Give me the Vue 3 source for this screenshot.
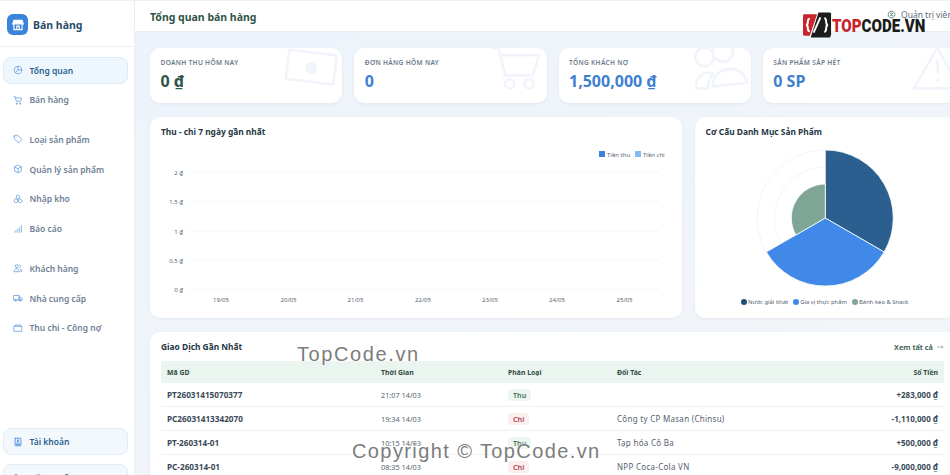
<script setup>
const icons = {
  pie: ['M21 12a9 9 0 1 1-18 0 9 9 0 0 1 18 0z', 'M12 3v9h9', 'M12 12l-6 6'],
  cart: ['M3 4h2.500l2.200 11h10.600L20.500 7H6.200', 'M9 20a1.300 1.300 0 1 0 .01 0z', 'M17 20a1.300 1.300 0 1 0 .01 0z'],
  tag: ['M3 5v6l9.500 9.500a1.500 1.500 0 0 0 2.100 0l5.900-5.900a1.500 1.500 0 0 0 0-2.100L11 3H5a2 2 0 0 0-2 2z', 'M7.500 7.500h.01'],
  box: ['M12 3l8 4v10l-8 4-8-4V7z', 'M4 7l8 4 8-4', 'M12 11v10'],
  cubes: ['M12 3l4 2.200v4.600L12 12 8 9.800V5.200z', 'M7 12l4 2.200v4.600L7 21l-4-2.200v-4.600z', 'M17 12l4 2.200v4.600L17 21l-4-2.200v-4.600z'],
  bars: ['M5 20v-3', 'M10 20v-7', 'M15 20V9', 'M20 20V4'],
  users: ['M9 11a3.500 3.500 0 1 0 0-7 3.500 3.500 0 0 0 0 7z', 'M2.500 20c0-4 3-6 6.500-6s6.500 2 6.500 6z', 'M16 4.500a3.500 3.500 0 0 1 0 6.500', 'M18 14.500c2 .8 3.500 2.500 3.500 5.500H19'],
  truck: ['M2 6h13v11H2z', 'M15 10h4l3 4v3h-7z', 'M6.500 19a2 2 0 1 0 0-4 2 2 0 0 0 0 4z', 'M17.500 19a2 2 0 1 0 0-4 2 2 0 0 0 0 4z'],
  wallet: ['M3 8h18v12H3z', 'M5 8V5h14v3'],
  account: ['M6 3h12a1 1 0 0 1 1 1v16a1 1 0 0 1-1 1H6a1 1 0 0 1-1-1V4a1 1 0 0 1 1-1z', 'M12 7.500a2.200 2.200 0 1 0 .01 0z', 'M8 17c0-2.500 1.800-3.500 4-3.500s4 1 4 3.500z'],
  logout: ['M9 4H5v16h4', 'M15 8l4 4-4 4', 'M19 12H9'],
  user: ['M12 3a9 9 0 1 0 .01 0z', 'M12 7.500a2.300 2.300 0 1 0 .01 0z', 'M8 16.500c0-2 2-3 4-3s4 1 4 3'],
}

const navGroups = [
  [
    { label: 'Tổng quan', icon: 'pie', active: true },
    { label: 'Bán hàng', icon: 'cart' },
  ],
  [
    { label: 'Loại sản phẩm', icon: 'tag' },
    { label: 'Quản lý sản phẩm', icon: 'box' },
    { label: 'Nhập kho', icon: 'cubes' },
    { label: 'Báo cáo', icon: 'bars' },
  ],
  [
    { label: 'Khách hàng', icon: 'users' },
    { label: 'Nhà cung cấp', icon: 'truck' },
    { label: 'Thu chi - Công nợ', icon: 'wallet' },
  ],
]

const kpis = [
  { label: 'Doanh thu hôm nay', value: '0 ₫', tone: 'green', art: 'bill' },
  { label: 'Đơn hàng hôm nay', value: '0', tone: 'blue', art: 'cart' },
  { label: 'Tổng khách nợ', value: '1,500,000 ₫', tone: 'blue', art: 'people' },
  { label: 'Sản phẩm sắp hết', value: '0 SP', tone: 'blue', art: 'warn' },
]

const yTicks = [
  { y: 172, label: '2 ₫' },
  { y: 201.500, label: '1,5 ₫' },
  { y: 231, label: '1 ₫' },
  { y: 260.500, label: '0,5 ₫' },
  { y: 289.500, label: '0 ₫' },
]
const xTicks = [
  { x: 221, label: '19/05' },
  { x: 288.500, label: '20/05' },
  { x: 355.500, label: '21/05' },
  { x: 423, label: '22/05' },
  { x: 490, label: '23/05' },
  { x: 557, label: '24/05' },
  { x: 624.500, label: '25/05' },
]

const pieLegend = [
  { label: 'Nước giải khát', color: '#1f4e79' },
  { label: 'Gia vị thực phẩm', color: '#4189e8' },
  { label: 'Bánh kẹo & Snack', color: '#7ea595' },
]

const rows = [
  { id: 'PT26031415070377', time: '21:07 14/03', kind: 'Thu', partner: '', amount: '+283,000 ₫' },
  { id: 'PC26031413342070', time: '19:34 14/03', kind: 'Chi', partner: 'Công ty CP Masan (Chinsu)', amount: '-1,110,000 ₫' },
  { id: 'PT-260314-01', time: '10:15 14/03', kind: 'Thu', partner: 'Tạp hóa Cô Ba', amount: '+500,000 ₫' },
  { id: 'PC-260314-01', time: '08:35 14/03', kind: 'Chi', partner: 'NPP Coca-Cola VN', amount: '-9,000,000 ₫' },
]
</script>

<template>
  <div class="app">
    <aside class="sidebar">
      <div class="brand">
        <span class="brand-mark">
          <svg viewBox="0 0 24 24" class="brand-icon">
            <path class="awning" d="M5 4h14l2 6H3z" />
            <path d="M5 10v10h14V10" />
            <path d="M10 20v-6h4v6" />
          </svg>
        </span>
        <span class="brand-name">Bán hàng</span>
      </div>
      <nav class="nav">
        <div v-for="(group, g) in navGroups" :key="g" class="nav-group">
          <a v-for="item in group" :key="item.label" class="nav-item" :class="{ active: item.active }">
            <svg viewBox="0 0 24 24" class="nav-icon">
              <path v-for="d in icons[item.icon]" :key="d" :d="d" />
            </svg>
            {{ item.label }}
          </a>
        </div>
      </nav>
      <div class="side-foot">
        <a class="foot-item">
          <svg viewBox="0 0 24 24" class="nav-icon">
            <path v-for="d in icons.account" :key="d" :d="d" />
          </svg>
          Tài khoản
        </a>
        <a class="foot-item">
          <svg viewBox="0 0 24 24" class="nav-icon">
            <path v-for="d in icons.logout" :key="d" :d="d" />
          </svg>
          Đăng xuất
        </a>
      </div>
    </aside>

    <main class="main">
      <header class="topbar">
        <h1>Tổng quan bán hàng</h1>
        <div class="who">
          <svg viewBox="0 0 24 24" class="who-icon">
            <path v-for="d in icons.user" :key="d" :d="d" />
          </svg>
          Quản trị viên
        </div>
      </header>

      <div class="content">
        <section class="kpis">
          <article v-for="k in kpis" :key="k.label" class="kpi">
            <svg class="kpi-art" :class="'art-' + k.art" viewBox="0 0 60 50">
              <template v-if="k.art === 'bill'">
                <rect x="3" y="7" width="52" height="32" rx="2" transform="rotate(7 30 25)" />
                <circle class="solid" cx="29" cy="24" r="6.500" />
              </template>
              <template v-else-if="k.art === 'cart'">
                <path d="M2 2h8l7 30h30l7-22H12" />
                <circle cx="22" cy="41" r="5" />
                <circle cx="43" cy="41" r="5" />
              </template>
              <template v-else-if="k.art === 'people'">
                <circle cx="12" cy="12" r="10" />
                <circle cx="32" cy="6" r="11" />
                <path d="M3 46c0-12 6-17 14-17 3 0 4 1 4 2-4 4-5 10-5 15z" />
                <path d="M21 44c0-14 10-19 20-19s17 9 17 15z" />
              </template>
              <template v-else>
                <path d="M28 2L3 46h50z" />
                <path d="M28 15l1 16" />
                <circle class="solid" cx="29" cy="37" r="2" />
              </template>
            </svg>
            <div class="kpi-label">{{ k.label }}</div>
            <div class="kpi-value" :class="k.tone">{{ k.value }}</div>
          </article>
        </section>

        <section class="charts">
          <article class="card">
            <h2>Thu - chi 7 ngày gần nhất</h2>
            <svg class="chart" viewBox="150 138 532 180">
              <line v-for="t in yTicks" :key="t.y" class="grid" x1="188" x2="658" :y1="t.y" :y2="t.y" />
              <text v-for="t in yTicks" :key="t.label" class="tick" x="183" :y="t.y + 2.500" text-anchor="end">{{ t.label }}</text>
              <text v-for="t in xTicks" :key="t.label" class="tick" :x="t.x" y="302" text-anchor="middle">{{ t.label }}</text>
              <rect x="599" y="151" width="6" height="6" fill="#3f80d6" />
              <text class="tick" x="607" y="156.500">Tiền thu</text>
              <rect x="635" y="151" width="6" height="6" fill="#86bcf2" />
              <text class="tick" x="643" y="156.500">Tiền chi</text>
            </svg>
          </article>

          <article class="card">
            <h2>Cơ Cấu Danh Mục Sản Phẩm</h2>
            <svg class="pie" viewBox="695 138 260 157">
              <circle class="ring" cx="825" cy="218" r="68" />
              <circle class="ring" cx="825" cy="218" r="51" />
              <path class="slice" fill="#2a5f8f" d="M825 218V150A68 68 0 0 1 883.900 252Z" />
              <path class="slice" fill="#4189e8" d="M825 218L883.900 252A68 68 0 0 1 766.100 252Z" />
              <path class="slice" fill="#7ea595" d="M825 218L795.600 235A34 34 0 0 1 825 184Z" />
            </svg>
            <div class="pie-legend">
              <span v-for="l in pieLegend" :key="l.label" class="pie-key">
                <i :style="{ background: l.color }"></i>{{ l.label }}
              </span>
            </div>
          </article>
        </section>

        <section class="card table-card">
          <div class="table-head">
            <h2>Giao Dịch Gần Nhất</h2>
            <a class="see-all">
              Xem tất cả
              <svg viewBox="0 0 8 6" class="arrow"><path d="M0 3h7M5 1l2 2-2 2" /></svg>
            </a>
          </div>
          <table>
            <colgroup>
              <col class="c1" /><col class="c2" /><col class="c3" /><col class="c4" /><col />
            </colgroup>
            <thead>
              <tr>
                <th>Mã GD</th>
                <th>Thời Gian</th>
                <th>Phân Loại</th>
                <th>Đối Tác</th>
                <th class="right">Số Tiền</th>
              </tr>
            </thead>
            <tbody>
              <tr v-for="r in rows" :key="r.id">
                <td class="id">{{ r.id }}</td>
                <td class="time">{{ r.time }}</td>
                <td><span class="badge" :class="r.kind === 'Thu' ? 'in' : 'out'">{{ r.kind }}</span></td>
                <td class="partner">{{ r.partner }}</td>
                <td class="right amount">{{ r.amount }}</td>
              </tr>
            </tbody>
          </table>
        </section>
      </div>
    </main>

    <div class="logo-mark">
      <svg viewBox="0 0 30 26" class="logo-svg">
        <path d="M1.500 2h13L7 24H1.500A1.500 1.500 0 0 1 0 22.500v-19A1.500 1.500 0 0 1 1.500 2z" fill="#c8242b" />
        <path d="M16 0h12l1 1v22l-1 3H8z" fill="#1c1c1c" />
        <path d="M7 6.500C5 6.500 5 8 5 10c0 2-1 3-2 3 1 0 2 1 2 3s0 3.500 2 3.500M22 6c2 0 2 2 2 4s1 3 2 3c-1 0-2 1-2 3s0 4-2 4" fill="none" stroke="#fff" stroke-width="2" />
        <path d="M18 5L11 21" fill="none" stroke="#fff" stroke-width="2" />
      </svg>
      <span class="logo-text"><b>TOP</b>CODE.VN</span>
    </div>
    <div class="mark mark-a">TopCode.vn</div>
    <div class="mark mark-b">Copyright © TopCode.vn</div>
  </div>
</template>

<style scoped>
.app {
  position: relative;
  display: flex;
  width: 950px;
  height: 475px;
  overflow: hidden;
  border-top: 1px solid #eef1f4;
  box-sizing: border-box;
  font-family: "Noto Sans", "Open Sans", sans-serif;
  color: #2c3e50;
  background: #f0f5fa;
}
.sidebar {
  flex: 0 0 135px;
  box-sizing: border-box;
  height: 499px;
  display: flex;
  flex-direction: column;
  background: #fff;
  border-right: 1px solid #e9eef4;
}
.brand {
  height: 46px;
  box-sizing: border-box;
  padding: 2px 0 0 7px;
  flex: none;
  display: flex;
  align-items: center;
  gap: 5px;
  border-bottom: 1px solid #eef1f4;
}
.brand-mark {
  width: 21px;
  height: 21px;
  border-radius: 6px;
  background: #3a83dc;
  display: flex;
  align-items: center;
  justify-content: center;
}
.brand-icon {
  width: 14px;
  height: 14px;
  fill: none;
  stroke: #fff;
  stroke-width: 2;
}
.brand-icon .awning {
  fill: #fff;
}
.brand-name {
  font-size: 10.500px;
  font-weight: 700;
  color: #2a4d69;
}
.nav {
  padding: 9.500px 6px 0 3px;
  display: flex;
  flex-direction: column;
  gap: 12.800px;
}
.nav-group {
  display: flex;
  flex-direction: column;
  gap: 2.700px;
}
.nav-item,
.foot-item {
  height: 27px;
  box-sizing: border-box;
  display: flex;
  align-items: center;
  gap: 6.500px;
  padding-left: 9px;
  border: 1px solid transparent;
  border-radius: 8px;
  font-size: 8.500px;
  font-weight: 600;
  color: #6f8096;
}
.nav-item.active {
  background: #eff7fe;
  border-color: #dcebf9;
  color: #2a5f8f;
}
.foot-item {
  background: #f3f8fd;
  border-color: #e1ecf7;
  color: #2a5f8f;
  margin-bottom: 9px;
}
.nav-icon {
  width: 10px;
  height: 10px;
  flex: none;
  fill: none;
  stroke: #6ea3dc;
  stroke-width: 2;
  stroke-linecap: round;
  stroke-linejoin: round;
}
.foot-item .nav-icon {
  stroke: #3a83dc;
}
.side-foot {
  margin-top: auto;
  padding: 0 6px 0 3px;
}
.main {
  flex: 1;
  min-width: 0;
  background: linear-gradient(160deg, #edf3fb, #f3f6f8);
}
.topbar {
  height: 31px;
  box-sizing: border-box;
  display: flex;
  align-items: center;
  justify-content: space-between;
  padding: 2px 0 0 15px;
  background: #fff;
  border-bottom: 1px solid #e9eef4;
}
.topbar h1 {
  margin: 0;
  font-size: 10.500px;
  font-weight: 700;
  color: #2f5548;
}
.who {
  width: 63px;
  flex: none;
  display: flex;
  align-items: center;
  gap: 5px;
  white-space: nowrap;
  overflow: hidden;
  font-size: 8.500px;
  color: #5b6b7d;
  margin-bottom: 5px;
}
.who-icon {
  width: 9px;
  height: 9px;
  flex: none;
  fill: none;
  stroke: #3f6f5a;
  stroke-width: 2;
}
.content {
  width: 805px;
  margin-left: 15px;
  padding-top: 16px;
  display: flex;
  flex-direction: column;
  gap: 14px;
}
.kpis {
  display: grid;
  grid-template-columns: repeat(4, 1fr);
  gap: 12px;
}
.kpi {
  position: relative;
  height: 55px;
  box-sizing: border-box;
  padding: 10px 10.500px;
  overflow: hidden;
  border-radius: 10px;
  background: #fff;
  box-shadow: 0 1px 3px rgba(60, 90, 130, .08);
}
.kpi-art {
  position: absolute;
  right: 2px;
  top: -2px;
  width: 56px;
  height: 46px;
  fill: none;
  stroke: #f1f5fb;
  stroke-width: 3;
}
.kpi-art .solid {
  fill: #f1f5fb;
  stroke: none;
}
.art-warn {
  right: -12px;
}
.kpi-label {
  font-size: 6.600px;
  font-weight: 600;
  letter-spacing: .3px;
  text-transform: uppercase;
  color: #6d7a8c;
  line-height: 10px;
}
.kpi-value {
  margin-top: 3px;
  font-size: 16px;
  font-weight: 700;
  line-height: 20px;
}
.kpi-value.green {
  color: #2f5548;
}
.kpi-value.blue {
  color: #3f7fcf;
}
.charts {
  display: grid;
  grid-template-columns: 532px 1fr;
  gap: 12.500px;
  height: 201px;
}
.card {
  background: #fff;
  border-radius: 10px;
  box-shadow: 0 1px 3px rgba(60, 90, 130, .08);
  overflow: hidden;
}
.card h2 {
  margin: 0;
  padding: 8px 11px 0;
  font-size: 8.400px;
  font-weight: 700;
  line-height: 13px;
  color: #263645;
}
.chart,
.pie {
  display: block;
  width: 100%;
}
.chart {
  height: 180px;
}
.pie {
  height: 157px;
}
.grid {
  stroke: #e6eaee;
  stroke-width: .7;
  stroke-dasharray: 2 2;
}
.tick {
  font-size: 6px;
  fill: #5a6570;
  font-family: "Noto Sans", "Open Sans", sans-serif;
}
.ring {
  fill: #fff;
  stroke: #eceff2;
  stroke-width: .7;
}
.slice {
  stroke: #fff;
  stroke-width: .8;
}
.pie-legend {
  display: flex;
  justify-content: center;
  gap: 5px;
  font-size: 5.900px;
  line-height: 14px;
  color: #55626e;
}
.pie-key {
  display: flex;
  align-items: center;
  gap: 1px;
}
.pie-key i {
  width: 6px;
  height: 6px;
  border-radius: 50%;
}
.table-card {
  padding-bottom: 11px;
}
.table-head {
  display: flex;
  align-items: center;
  justify-content: space-between;
  height: 29px;
  padding-right: 11px;
}
.table-head h2 {
  padding: 0 11px;
}
.see-all {
  font-size: 7.500px;
  font-weight: 600;
  color: #2f5548;
  display: flex;
  align-items: center;
  gap: 4px;
}
.arrow {
  width: 7px;
  height: 6px;
  fill: none;
  stroke: #8c97a3;
  stroke-width: .8;
}
table {
  width: 783px;
  margin-left: 11px;
  border-collapse: collapse;
  table-layout: fixed;
  font-size: 8px;
  color: #55626e;
}
.c1 { width: 214px; }
.c2 { width: 127px; }
.c3 { width: 109px; }
.c4 { width: 210px; }
th {
  height: 22px;
  padding: 0 6px;
  text-align: left;
  font-size: 6.900px;
  font-weight: 700;
  color: #2f4a42;
  background: #eaf5f0;
}
td {
  height: 23px;
  padding: 0 6px;
  border-bottom: 1px solid #eff2f5;
  white-space: nowrap;
}
.right {
  text-align: right;
}
.id,
.amount {
  font-weight: 700;
  color: #3a4a58;
}
.id {
  font-size: 8.200px;
}
.time {
  font-size: 7.300px;
}
.partner {
  font-size: 8px;
  letter-spacing: .28px;
}
.badge {
  display: inline-block;
  padding: 0 5px;
  line-height: 12px;
  border-radius: 4px;
  font-size: 7.200px;
  font-weight: 600;
}
.badge.in {
  background: #eef6f2;
  color: #3f6f5a;
}
.badge.out {
  background: #fdeeee;
  color: #b03a4a;
}
.logo-mark {
  position: absolute;
  left: 803px;
  top: 11px;
  display: flex;
  align-items: center;
  gap: 0;
}
.logo-svg {
  width: 29px;
  height: 26px;
}
.logo-text {
  font-family: "Roboto", sans-serif;
  font-size: 18px;
  font-weight: 900;
  color: #1c1c1c;
  display: inline-block;
  transform: scaleX(.84);
  transform-origin: left center;
  white-space: nowrap;
}
.logo-text b {
  color: #c8242b;
  font-weight: 900;
}
.mark {
  position: absolute;
  font-family: "Liberation Sans", sans-serif;
  font-size: 20px;
  color: #7c7c7c;
  white-space: nowrap;
  text-shadow: 0 0 2px #fff, 0 0 2px #fff;
}
.mark-a {
  left: 297px;
  top: 342px;
  letter-spacing: 1.600px;
}
.mark-b {
  left: 352px;
  top: 439px;
  letter-spacing: 1.400px;
}
</style>

<style>
html, body {
  margin: 0;
  background: #f0f5fa;
  overflow: hidden;
}
</style>
